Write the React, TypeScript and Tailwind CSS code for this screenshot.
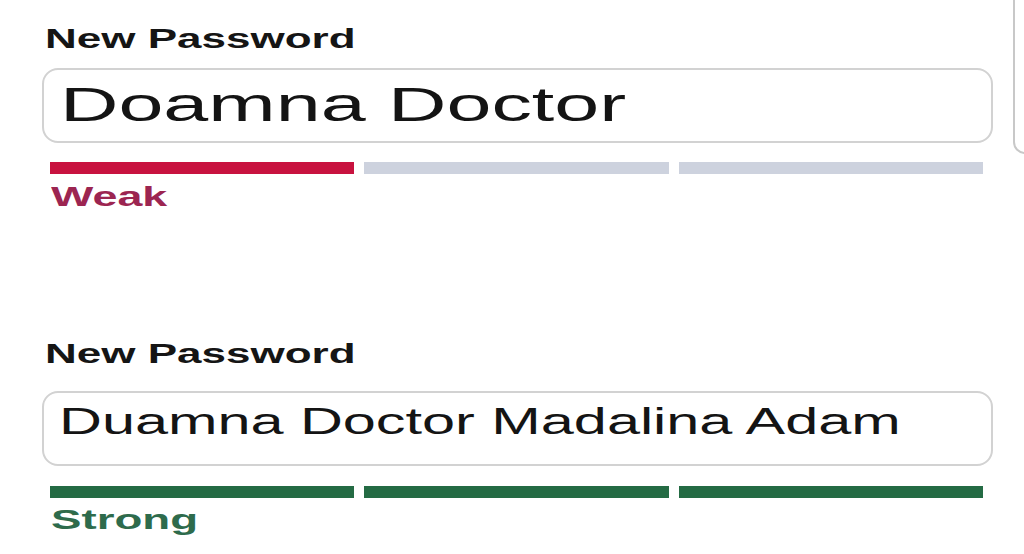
type Strength = 'weak' | 'strong';

interface PasswordFieldProps {
  value: string;
  strength: Strength;
  className: string;
  inputClassName: string;
  valueClassName: string;
  barsClassName: string;
  captionClassName: string;
}

// the screenshot is stretched sideways, so text gets a horizontal scale
const PasswordField = ({
  value,
  strength,
  className,
  inputClassName,
  valueClassName,
  barsClassName,
  captionClassName,
}: PasswordFieldProps) => {
  const isStrong = strength === 'strong';
  const bars = isStrong ? ['bg-[#246b44]', 'bg-[#246b44]', 'bg-[#246b44]'] : ['bg-[#c8123f]', 'bg-[#cdd2de]', 'bg-[#cdd2de]'];

  return (
    <div className={className}>
      <div className="h-[27px] pl-[3px] text-[27px] leading-[27px] font-bold text-[#151515]">
        <span className="inline-block origin-left scale-x-[1.63] whitespace-nowrap">New Password</span>
      </div>

      <div className={`h-[75px] rounded-[16px] border-2 border-[#d2d2d2] bg-white ${inputClassName}`}>
        <span className={`inline-block origin-left whitespace-nowrap text-[#141414] ${valueClassName}`}>{value}</span>
      </div>

      <div className={`flex gap-[10px] pl-[8px] pr-[10px] ${barsClassName}`}>
        {bars.map((color, i) => (
          <div key={i} className={`h-[12px] flex-1 ${color}`} />
        ))}
      </div>

      <div
        className={`h-[27px] pl-[9px] text-[27px] leading-[27px] font-bold ${
          isStrong ? 'text-[#2e6b4c]' : 'text-[#9c2551]'
        } ${captionClassName}`}
      >
        <span className={`inline-block origin-left whitespace-nowrap ${isStrong ? 'scale-x-[1.69]' : 'scale-x-[1.66]'}`}>
          {isStrong ? 'Strong' : 'Weak'}
        </span>
      </div>
    </div>
  );
};

export default function App() {
  return (
    <div className="relative h-[554px] w-full overflow-hidden bg-white font-['Liberation_Sans',Arial,sans-serif]">
      <div className="pl-[42px] pr-[31px]">
        <PasswordField
          value="Doamna Doctor"
          strength="weak"
          className="pt-[26px]"
          inputClassName="mt-[15px] pl-[16px] pt-[10px]"
          valueClassName="text-[49px] leading-[49px] scale-x-[1.65]"
          barsClassName="mt-[19px]"
          captionClassName="mt-[10px]"
        />
        <PasswordField
          value="Duamna Doctor Madalina Adam"
          strength="strong"
          className="mt-[130px]"
          inputClassName="mt-[23px] pl-[15px] pt-[10px]"
          valueClassName="text-[37px] leading-[37px] scale-x-[1.605]"
          barsClassName="mt-[20px]"
          captionClassName="mt-[9px]"
        />
      </div>

      {/* edge of a panel peeking in at the top right */}
      <div className="absolute left-[1013px] top-[-12px] h-[166px] w-[40px] rounded-[12px] border-2 border-[#c8c8c8] bg-white" />
    </div>
  );
}
